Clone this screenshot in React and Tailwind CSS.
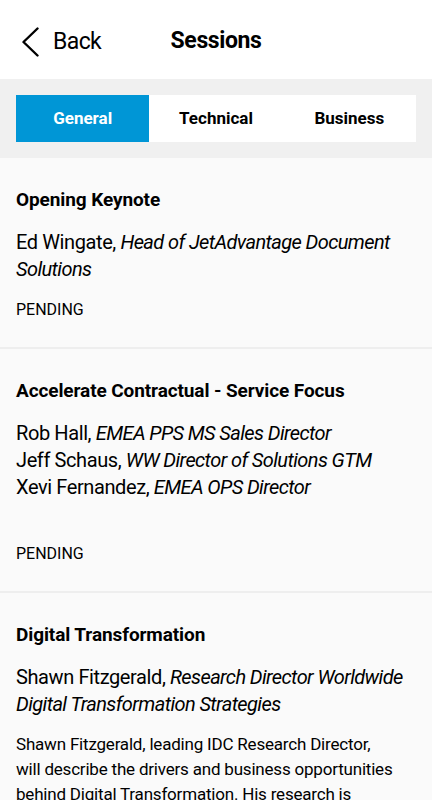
import React, { useState } from 'react';

const TABS = ['General', 'Technical', 'Business'];

const FONT = { fontFamily: 'Roboto, "Noto Sans", sans-serif' };

const Session = ({ title, speakers, status, gap = 'mt-4', description, last }) => (
  <div className={`px-4 pt-[30px] pb-[26px] ${last ? '' : 'border-b-2 border-[#eeeeee]'}`}>
    <h2 className="text-[19px] leading-6 font-bold text-black tracking-[-0.1px]">{title}</h2>
    <div className="mt-[17px] text-[20px] leading-[27px] text-black tracking-[-0.4px]">
      {speakers.map((s, i) => (
        <div key={i}>
          {s.name}, <em className="italic tracking-[-0.6px]">{s.role}</em>
        </div>
      ))}
    </div>
    {status && <div className={`${gap} text-[16px] leading-[22px] text-black`}>{status}</div>}
    {description && (
      <p className="mt-[14px] text-[17px] leading-[25px] text-black tracking-[-0.2px]">
        {description.map((line, i) => (
          <React.Fragment key={i}>{line}<br /></React.Fragment>
        ))}
      </p>
    )}
  </div>
);

export default function App() {
  const [tab, setTab] = useState('General');

  return (
    <div className="w-[432px] min-h-[800px] bg-[#fafafa] overflow-hidden" style={FONT}>
      {/* Header */}
      <div className="h-[79px] bg-white flex items-center px-[22px] pt-1 relative">
        <button className="flex items-center gap-[14px] text-black">
          <svg width="17" height="30" viewBox="0 0 17 30" fill="none" stroke="black" strokeWidth="2.4" strokeLinecap="round" strokeLinejoin="round">
            <polyline points="15.5,1.5 1.5,15 15.5,28.5" />
          </svg>
          <span className="text-[23px] leading-none tracking-[-0.6px]">Back</span>
        </button>
        <h1 className="absolute left-0 right-0 text-center text-[23px] font-bold text-black tracking-[-0.4px] pointer-events-none">Sessions</h1>
      </div>

      {/* Tabs */}
      <div className="bg-[#f0f0f0] px-4 pt-4 pb-4">
        <div className="grid grid-cols-3 bg-white h-[47px]">
          {TABS.map(t => (
            <button
              key={t}
              onClick={() => setTab(t)}
              className={`text-[17px] font-bold ${tab === t ? 'bg-[#0096d6] text-white' : 'text-black'}`}
            >
              {t}
            </button>
          ))}
        </div>
      </div>

      {/* Sessions */}
      <Session
        title="Opening Keynote"
        speakers={[{ name: 'Ed Wingate', role: 'Head of JetAdvantage Document Solutions' }]}
        status="PENDING"
      />
      <Session
        title="Accelerate Contractual - Service Focus"
        speakers={[
          { name: 'Rob Hall', role: 'EMEA PPS MS Sales Director' },
          { name: 'Jeff Schaus', role: 'WW Director of Solutions GTM' },
          { name: 'Xevi Fernandez', role: 'EMEA OPS Director' },
        ]}
        status="PENDING"
        gap="mt-[42px]"
      />
      <Session
        title="Digital Transformation"
        speakers={[{ name: 'Shawn Fitzgerald', role: 'Research Director Worldwide Digital Transformation Strategies' }]}
        description={[
          'Shawn Fitzgerald, leading IDC Research Director,',
          'will describe the drivers and business opportunities',
          'behind Digital Transformation.  His research is',
        ]}
        last
      />
    </div>
  );
}
